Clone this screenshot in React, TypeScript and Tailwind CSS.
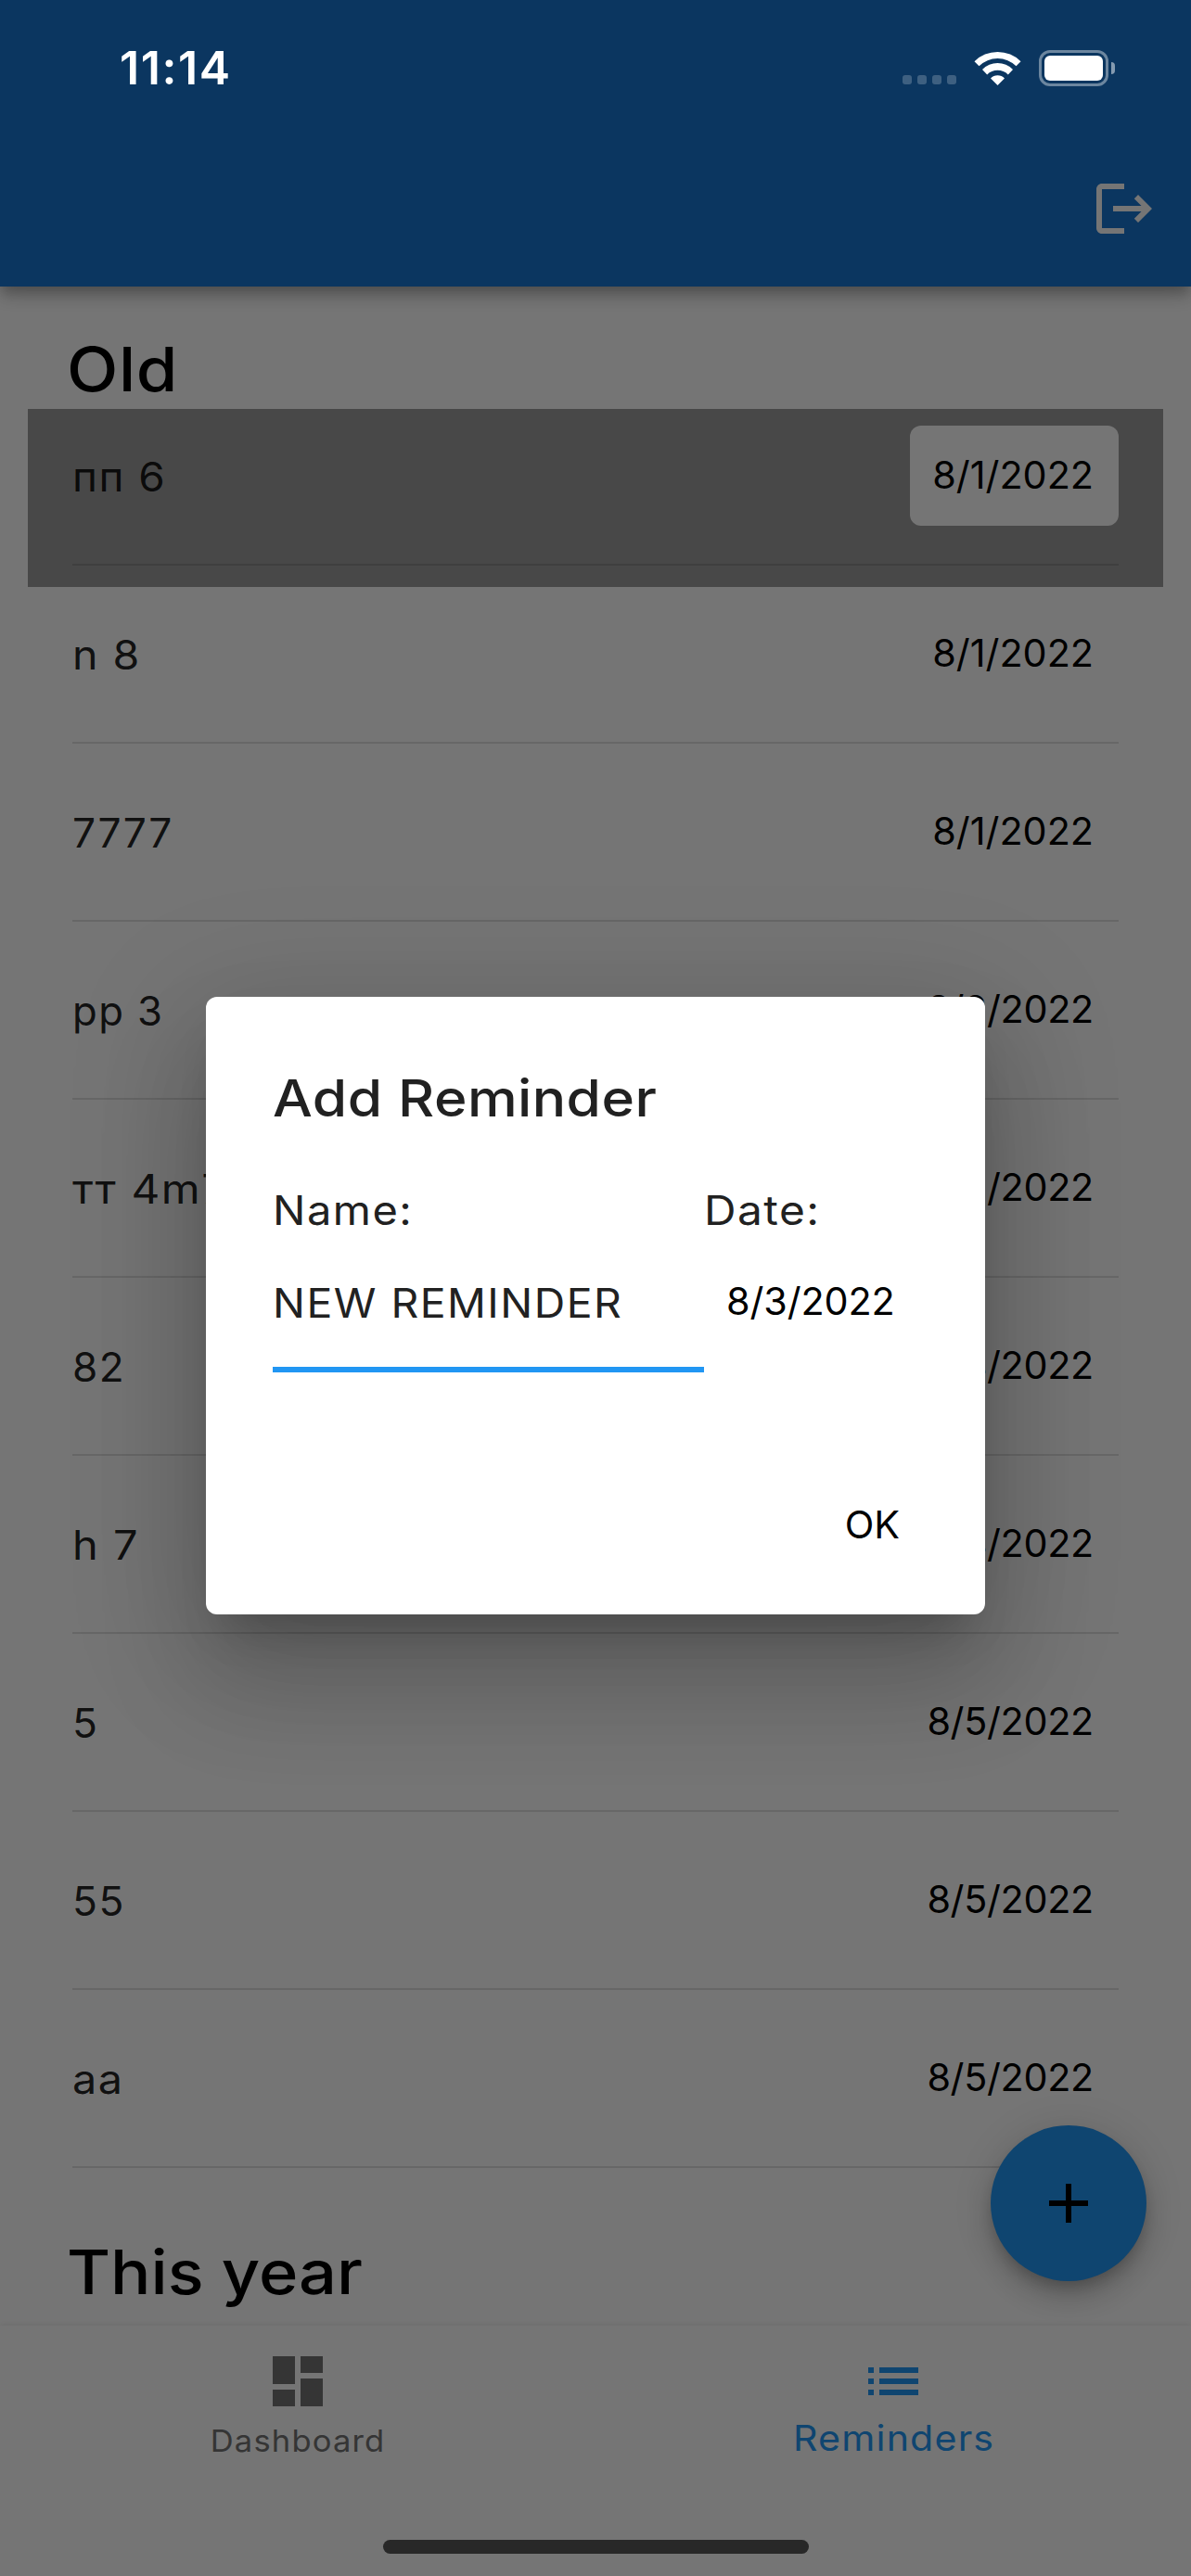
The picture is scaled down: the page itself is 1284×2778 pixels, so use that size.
import { MdAdd, MdDashboard, MdList, MdLogout } from "react-icons/md";

type Reminder = { name: string; date: string; fit: string; selected?: boolean };

const oldReminders: Reminder[] = [
  { name: "пп 6", date: "8/1/2022", fit: "scale-x-[1.056]", selected: true },
  { name: "n 8", date: "8/1/2022", fit: "scale-x-[1.07]" },
  { name: "7777", date: "8/1/2022", fit: "scale-x-[1.02]" },
  { name: "рр 3", date: "8/2/2022", fit: "scale-x-[1.005]" },
  { name: "тт 4m7", date: "8/2/2022", fit: "scale-x-[1.1]" },
  { name: "82", date: "8/4/2022", fit: "scale-x-[1.015]" },
  { name: "h 7", date: "8/4/2022", fit: "scale-x-[1.08]" },
  { name: "5", date: "8/5/2022", fit: "scale-x-[1.02]" },
  { name: "55", date: "8/5/2022", fit: "scale-x-[1.02]" },
  { name: "aa", date: "8/5/2022", fit: "scale-x-[1.075]" },
];

function SectionTitle({ children, className }: { children: string; className: string }) {
  return (
    <h2
      className={`origin-left pt-12 pl-[72px] text-[65.3px] leading-[84px] font-medium whitespace-nowrap text-black ${className}`}
    >
      <span className="inline-block origin-left scale-x-[1.105]">{children}</span>
    </h2>
  );
}

function ReminderRow({ name, date, fit, selected }: Reminder) {
  return (
    <li className={`mx-[30px] h-48 px-12 pt-[18px] ${selected ? "bg-[#9e9e9e]" : ""}`}>
      <div className="flex h-[151px] items-start justify-between border-b-2 border-black/12">
        <span
          className={`origin-left pt-px text-[43.5px] leading-[108px] tracking-[1.4px] whitespace-nowrap text-black/87 ${fit}`}
        >
          {name}
        </span>
        <span
          className={`h-[108px] rounded-xl bg-white pr-[27px] pl-[24px] text-[41.3px] leading-[106px] text-black ${
            date === "8/1/2022" ? "" : "tracking-[-0.3px]"
          }`}
        >
          {date}
        </span>
      </div>
    </li>
  );
}

function StatusBar() {
  return (
    <div className="absolute inset-x-0 top-0 flex h-[146px] items-center justify-between pr-[82px] pl-[129px] text-white">
      <span className="text-[50px] leading-[146px] font-semibold tracking-[1.6px]">11:14</span>
      <div className="flex items-center">
        <div className="mt-[26px] mr-[19px] flex gap-1.5">
          <i className="size-2.5 rounded-[3px] bg-white/21" />
          <i className="size-2.5 rounded-[3px] bg-white/21" />
          <i className="size-2.5 rounded-[3px] bg-white/21" />
          <i className="size-2.5 rounded-[3px] bg-white/21" />
        </div>
        <svg width="51" height="37" viewBox="0 0 51 37" fill="white" className="mr-[19px]">
          <path d="M.5 11.2A35.5 35.5 0 0 1 50.5 11.2L45.5 16.3A28.5 28.5 0 0 0 5.5 16.3Z" />
          <path d="M9 20A23 23 0 0 1 42 20L36.8 25.4A16.2 16.2 0 0 0 14.2 25.4Z" />
          <path d="M18 29.4A10.5 10.5 0 0 1 33 29.4L25.5 37Z" />
        </svg>
        <div className="h-[39px] w-[75px] rounded-[12px] border-3 border-white/40 p-[3px]">
          <div className="size-full rounded-[6px] bg-white" />
        </div>
        <div className="ml-[3px] h-[13px] w-1 rounded-r-full bg-white/50" />
      </div>
    </div>
  );
}

function AddReminderDialog() {
  return (
    <div className="absolute inset-0 flex items-center justify-center bg-black/54 pt-[140px] pb-[102px]">
      <section className="h-[666px] w-[840px] rounded-xl bg-white px-[72px] pt-[72px] text-[#212121] shadow-[0_33px_45px_-21px_rgba(0,0,0,0.2),0_72px_114px_9px_rgba(0,0,0,0.14),0_27px_138px_24px_rgba(0,0,0,0.12)]">
        <h1 className="origin-left scale-x-[1.1] text-[55px] leading-[75px] font-medium tracking-[0.4px] whitespace-nowrap">
          Add Reminder
        </h1>
        <div className="mt-[53px] flex">
          <div className="w-[465px] text-[43.5px]">
            <div className="origin-left scale-x-[1.08] leading-[60px] tracking-[1.4px]">Name:</div>
            <div className="h-[145px] border-b-6 border-[#2196f3] pt-px leading-[139px] whitespace-nowrap">
              <span className="inline-block origin-left scale-x-[1.065] tracking-[1.4px]">NEW REMINDER</span>
            </div>
          </div>
          <div>
            <div className="origin-left scale-x-[1.1] text-[43.5px] leading-[60px] tracking-[1.3px]">Date:</div>
            <div className="pl-6 text-[41.3px] leading-[137px] tracking-[-0.1px] text-black">8/3/2022</div>
          </div>
        </div>
        <div className="mt-[134px] mr-5 text-right text-[41.3px] leading-[60px] text-black">OK</div>
      </section>
    </div>
  );
}

export default function App() {
  return (
    <div className="relative flex h-[2778px] w-[1284px] flex-col overflow-hidden bg-white font-['Inter','Noto_Sans',sans-serif]">
      <header className="z-10 flex h-[309px] shrink-0 items-end justify-end bg-[#1976d2] pr-9 pb-12 shadow-[0_6px_12px_-3px_rgba(0,0,0,0.2),0_12px_15px_0_rgba(0,0,0,0.14),0_3px_30px_0_rgba(0,0,0,0.12)]">
        <MdLogout className="size-[72px] text-white" />
      </header>

      <main className="min-h-0 flex-1 overflow-hidden">
        <SectionTitle className="tracking-[0.6px]">Old</SectionTitle>
        <ul>
          {oldReminders.map((r) => (
            <ReminderRow key={r.name} {...r} />
          ))}
        </ul>
        <SectionTitle className="tracking-normal">This year</SectionTitle>
      </main>

      <nav className="flex h-[270px] shrink-0 bg-white pt-6 shadow-[0_-1px_6px_rgba(0,0,0,0.08)]">
        <div className="flex w-1/2 flex-col items-center text-[#757575]">
          <MdDashboard className="size-[72px]" />
          <span className="scale-x-[1.047] text-[33px] leading-[56px] tracking-[1.1px]">Dashboard</span>
        </div>
        <div className="flex w-1/2 flex-col items-center text-[#2196f3]">
          <MdList className="size-[72px]" />
          <span className="scale-x-[1.069] pl-px text-[38.5px] leading-[50px] tracking-[1.1px]">Reminders</span>
        </div>
      </nav>

      <button className="absolute right-12 bottom-[318px] flex size-[168px] items-center justify-center rounded-full bg-[#2196f3] text-black shadow-[0_9px_15px_-3px_rgba(0,0,0,0.2),0_18px_30px_0_rgba(0,0,0,0.14),0_3px_54px_0_rgba(0,0,0,0.12)]">
        <MdAdd className="size-[72px]" />
      </button>

      <div className="absolute inset-0 z-20">
        <AddReminderDialog />
        <StatusBar />
        <div className="absolute bottom-6 left-[413px] h-[15px] w-[459px] rounded-full bg-[#282828]" />
      </div>
    </div>
  );
}
